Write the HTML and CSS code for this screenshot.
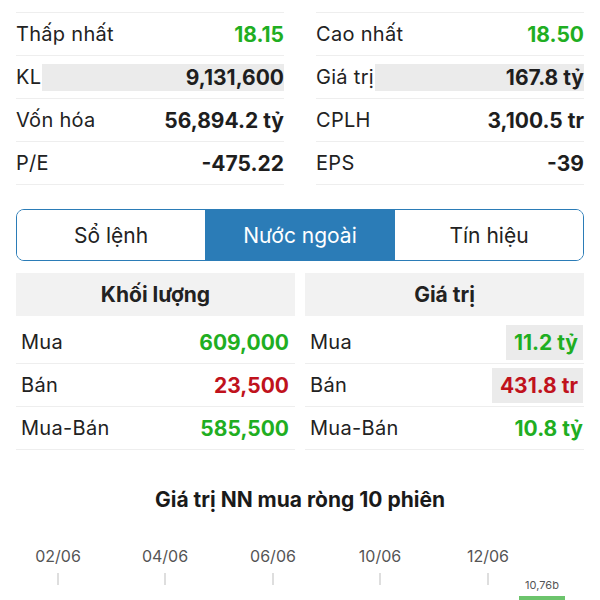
FILE: index.html
```html
<!DOCTYPE html>
<html lang="vi">
<head>
  <meta charset="UTF-8">
  <meta name="viewport" content="width=device-width, initial-scale=1.0">
  <title>Chi tiết cổ phiếu</title>
  <link rel="stylesheet" href="styles.css">
</head>
<body>
  <div class="stats">
    <div class="stats-col">
      <div class="stat-row"><span class="label">Thấp nhất</span><span class="value up">18.15</span></div>
      <div class="stat-row"><span class="label">KL</span><span class="value shaded shaded-kl">9,131,600</span></div>
      <div class="stat-row"><span class="label">Vốn hóa</span><span class="value">56,894.2 tỷ</span></div>
      <div class="stat-row"><span class="label">P/E</span><span class="value">-475.22</span></div>
    </div>
    <div class="stats-col">
      <div class="stat-row"><span class="label">Cao nhất</span><span class="value up">18.50</span></div>
      <div class="stat-row"><span class="label">Giá trị</span><span class="value shaded shaded-gt">167.8 tỷ</span></div>
      <div class="stat-row"><span class="label">CPLH</span><span class="value">3,100.5 tr</span></div>
      <div class="stat-row"><span class="label">EPS</span><span class="value">-39</span></div>
    </div>
  </div>

  <div class="tabs">
    <button class="tab">Sổ lệnh</button>
    <button class="tab active">Nước ngoài</button>
    <button class="tab">Tín hiệu</button>
  </div>

  <div class="foreign">
    <div class="foreign-col">
      <div class="foreign-head">Khối lượng</div>
      <div class="foreign-row"><span class="label">Mua</span><span class="value up">609,000</span></div>
      <div class="foreign-row"><span class="label">Bán</span><span class="value down">23,500</span></div>
      <div class="foreign-row"><span class="label">Mua-Bán</span><span class="value up">585,500</span></div>
    </div>
    <div class="foreign-col">
      <div class="foreign-head">Giá trị</div>
      <div class="foreign-row"><span class="label">Mua</span><span class="value up flash">11.2 tỷ</span></div>
      <div class="foreign-row"><span class="label">Bán</span><span class="value down flash">431.8 tr</span></div>
      <div class="foreign-row"><span class="label">Mua-Bán</span><span class="value up">10.8 tỷ</span></div>
    </div>
  </div>

  <h2 class="chart-title">Giá trị NN mua ròng 10 phiên</h2>

  <svg class="chart" width="600" height="100" viewBox="0 0 600 100">
    <g class="axis-labels">
      <text x="58" y="50">02/06</text>
      <text x="165" y="50">04/06</text>
      <text x="273" y="50">06/06</text>
      <text x="380" y="50">10/06</text>
      <text x="488" y="50">12/06</text>
    </g>
    <g class="grid">
      <line x1="58" y1="61" x2="58" y2="100"/>
      <line x1="165" y1="61" x2="165" y2="100"/>
      <line x1="273" y1="61" x2="273" y2="100"/>
      <line x1="380" y1="61" x2="380" y2="100"/>
      <line x1="488" y1="61" x2="488" y2="100"/>
    </g>
    <text class="bar-label" x="542" y="77">10,76b</text>
    <rect class="bar" x="519" y="84" width="46" height="16"/>
  </svg>
</body>
</html>
```

FILE: styles.css
```css
body {
  font-family: Inter, 'Noto Sans', sans-serif;
  margin: 0;
  background-color: #fff;
  color: #222;
  width: 600px;
  overflow: hidden;
}

.stats {
  display: grid;
  grid-template-columns: 1fr 1fr;
  column-gap: 32px;
  padding: 12px 16px 0;
}

.stats-col {
  border-top: 1px solid #eee;
}

.stat-row {
  display: flex;
  align-items: center;
  justify-content: space-between;
  height: 42px;
  border-bottom: 1px solid #eee;
  font-size: 20px;
}

.label {
  color: #222;
  letter-spacing: 0.3px;
}

.value {
  font-size: 21px;
  font-weight: 700;
  color: #1e1e1e;
}

.up {
  color: #1fae22;
}

.down {
  color: #c0121c;
}

.shaded {
  background-color: #ebebeb;
  text-align: right;
  line-height: 27px;
}

.shaded-kl {
  width: 242px;
}

.shaded-gt {
  width: 209px;
}

.tabs {
  display: flex;
  margin: 24px 16px 0;
  height: 50px;
  border: 1.5px solid #2b7cb7;
  border-radius: 8px;
  overflow: hidden;
}

.tab {
  flex: 1;
  border: none;
  background-color: #fff;
  font-family: inherit;
  font-size: 21px;
  color: #222;
  padding: 0;
}

.tab + .tab {
  border-left: 1.5px solid #2b7cb7;
}

.tab.active {
  background-color: #2b7cb7;
  color: #fff;
}

.foreign {
  display: grid;
  grid-template-columns: 279px 279px;
  column-gap: 10px;
  padding: 12px 16px 0;
}

.foreign-head {
  background-color: #f2f2f2;
  height: 43px;
  line-height: 43px;
  text-align: center;
  font-size: 21px;
  font-weight: 700;
  margin-bottom: 5px;
}

.foreign-row {
  display: flex;
  align-items: center;
  justify-content: space-between;
  height: 42px;
  padding: 0 6px 0 5px;
  border-bottom: 1px solid #eee;
  font-size: 20px;
}

.foreign-col:last-child .foreign-row {
  padding-right: 1px;
}

.flash {
  background-color: #ebebeb;
  line-height: 35px;
  padding: 0 5px 0 8px;
}

.chart-title {
  margin: 37px 0 0;
  text-align: center;
  font-size: 21px;
  font-weight: 700;
  color: #1a1a1a;
}

.chart {
  display: block;
}

.axis-labels text {
  font-size: 16px;
  fill: #555;
  text-anchor: middle;
}

.grid line {
  stroke: #c8c8c8;
  stroke-width: 1.2;
  stroke-dasharray: 12 15;
}

.bar-label {
  font-size: 11px;
  fill: #555;
  text-anchor: middle;
}

.bar {
  fill: #6cc46c;
}
```
